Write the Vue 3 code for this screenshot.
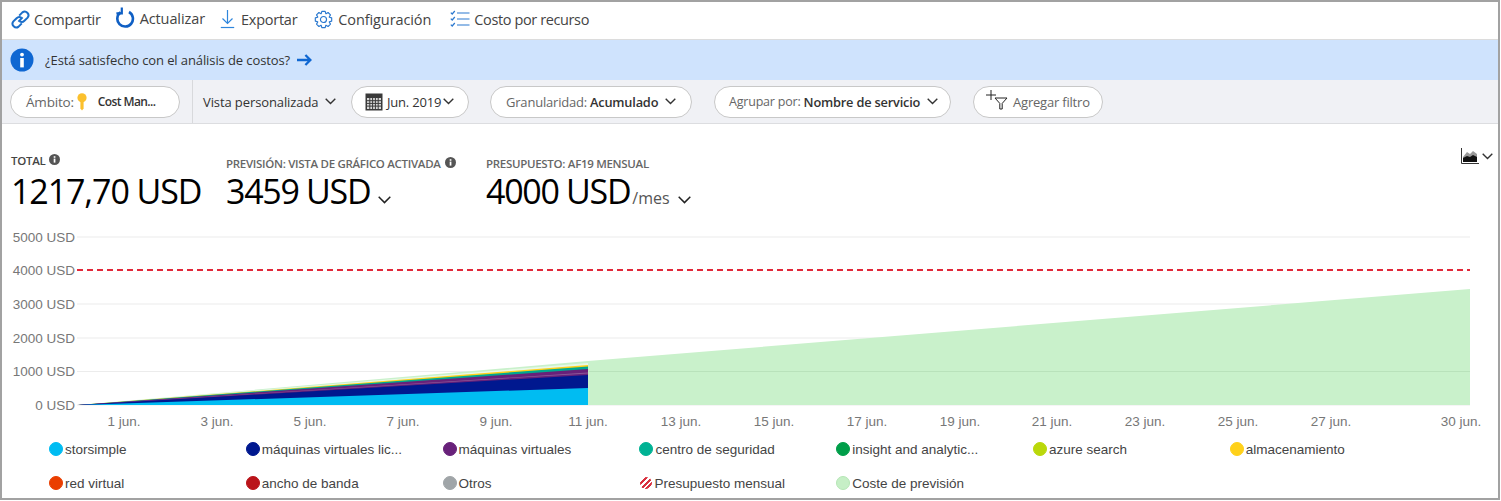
<script setup>
const gridLines = [
  { label: '5000 USD', y: 237 },
  { label: '4000 USD', y: 270 },
  { label: '3000 USD', y: 304 },
  { label: '2000 USD', y: 338 },
  { label: '1000 USD', y: 371.5 },
  { label: '0 USD', y: 405 }
]

const days = [
  { label: '1 jun.', x: 124 },
  { label: '3 jun.', x: 217 },
  { label: '5 jun.', x: 310 },
  { label: '7 jun.', x: 403 },
  { label: '9 jun.', x: 496 },
  { label: '11 jun.', x: 588 },
  { label: '13 jun.', x: 681 },
  { label: '15 jun.', x: 774 },
  { label: '17 jun.', x: 867 },
  { label: '19 jun.', x: 960 },
  { label: '21 jun.', x: 1052 },
  { label: '23 jun.', x: 1145 },
  { label: '25 jun.', x: 1238 },
  { label: '27 jun.', x: 1331 },
  { label: '30 jun.', x: 1461 }
]

// stacked layers, top to bottom so the lower ones paint last
const layers = [
  { color: '#ffd11a', top: 365 },
  { color: '#00a88f', top: 366.6 },
  { color: '#68217a', top: 369 },
  { color: '#8d5a99', top: 372.6 },
  { color: '#68217a', top: 373.4 },
  { color: '#00188f', top: 375 },
  { color: '#00bcf2', top: 388 }
]

const legend = [
  { name: 'storsimple', color: '#00bcf2' },
  { name: 'máquinas virtuales lic...', color: '#00188f' },
  { name: 'máquinas virtuales', color: '#68217a' },
  { name: 'centro de seguridad', color: '#00b294' },
  { name: 'insight and analytic...', color: '#009e49' },
  { name: 'azure search', color: '#bad80a' },
  { name: 'almacenamiento', color: '#ffd11a' },
  { name: 'red virtual', color: '#ea3e00' },
  { name: 'ancho de banda', color: '#ba141a' },
  { name: 'Otros', color: '#a0a5a8' },
  { name: 'Presupuesto mensual', hatch: true },
  { name: 'Coste de previsión', color: '#c6efc6', ring: '#b5e6b5' }
]

// gear outline for the settings button
function gearPath() {
  const pts = []
  const teeth = 8
  for (let i = 0; i < teeth; i++) {
    const a = (i / teeth) * Math.PI * 2
    const step = (Math.PI * 2) / teeth
    const offsets = [
      [-0.5, 6.6],
      [-0.27, 8.8],
      [0.27, 8.8],
      [0.5, 6.6]
    ]
    for (const [o, r] of offsets) {
      const t = a + o * step * 0.95
      pts.push((10 + r * Math.cos(t)).toFixed(2) + ' ' + (10 + r * Math.sin(t)).toFixed(2))
    }
  }
  return 'M' + pts.join('L') + 'Z'
}
</script>

<template>
  <div class="page">
    <div class="toolbar">
      <button class="tool tool-share">
        <svg width="21" height="21" viewBox="0 0 21 21" fill="none" stroke="#1b6ec9" stroke-width="2">
          <path d="M8.4 12.6l4.2-4.2" />
          <path d="M9.2 6.6l3.2-3.2a3.7 3.7 0 0 1 5.2 5.2l-3.2 3.2a3.7 3.7 0 0 1-4.8.3" />
          <path d="M11.8 14.4l-3.2 3.2a3.7 3.7 0 0 1-5.2-5.2l3.2-3.2a3.7 3.7 0 0 1 4.8-.3" />
        </svg>
        Compartir
      </button>
      <button class="tool tool-refresh">
        <svg width="19" height="22" viewBox="0 0 19 22" fill="none" stroke="#0f5fc4" stroke-width="2.6">
          <path d="M4.6 5.4A7.8 7.8 0 1 0 13 5" />
          <path d="M5.8 0.6v5.8H0.4" stroke-width="2.2" />
        </svg>
        Actualizar
      </button>
      <button class="tool tool-export">
        <svg width="15" height="20" viewBox="0 0 15 20" fill="none" stroke="#2f86dc" stroke-width="1.2">
          <path d="M7.5 1v13" />
          <path d="M2.5 9.5l5 5 5-5" />
          <path d="M0.8 18.5h13.4" />
        </svg>
        Exportar
      </button>
      <button class="tool tool-config">
        <svg width="19" height="19" viewBox="0 0 20 20" fill="none" stroke="#2a78cf" stroke-width="1.2">
          <path :d="gearPath()" stroke-linejoin="round" />
          <circle cx="10" cy="10" r="3.2" />
        </svg>
        Configuración
      </button>
      <button class="tool tool-cost">
        <svg width="20" height="18" viewBox="0 0 20 18" fill="none" stroke="#2a78cf" stroke-width="1.2">
          <path d="M7 3h12.5M7 9h12.5M7 15h12.5" />
          <path d="M0.8 2.6l1.4 1.4 2.6-3M0.8 8.6l1.4 1.4 2.6-3M0.8 14.6l1.4 1.4 2.6-3" />
        </svg>
        Costo por recurso
      </button>
    </div>

    <div class="banner">
      <svg class="info-big" width="24" height="24" viewBox="0 0 24 24">
        <circle cx="12" cy="12" r="11.5" fill="#0f67d2" />
        <circle cx="12" cy="6.6" r="1.9" fill="#fff" />
        <rect x="10.2" y="10" width="3.6" height="9.4" fill="#fff" />
      </svg>
      <span class="banner-text">¿Está satisfecho con el análisis de costos?</span>
      <svg width="15" height="12" viewBox="0 0 15 12" fill="none" stroke="#0f67d2" stroke-width="2.3">
        <path d="M0 6h13M8.4 1l5 5-5 5" />
      </svg>
    </div>

    <div class="filters">
      <div class="pill pill-scope">
        <span class="muted">Ámbito:</span>
        <svg class="key" width="10" height="18" viewBox="0 0 10 18" fill="#fbc02d">
          <circle cx="5" cy="4.8" r="4.6" />
          <path d="M3.4 8h3.2v7.4L5 17.6l-1.6-2z" />
        </svg>
        <b>Cost Man...</b>
      </div>
      <div class="divider"></div>
      <div class="view-name">
        Vista personalizada
        <svg class="chev" width="11" height="7" viewBox="0 0 11 7"><path d="M0.7 0.8l4.8 4.8 4.8-4.8" /></svg>
      </div>
      <div class="pill pill-date">
        <svg width="18" height="18" viewBox="0 0 18 18">
          <rect x="0.5" y="0.5" width="17" height="17" fill="#3a3a3a" />
          <rect x="2" y="5" width="14" height="11" fill="#d9d9d9" />
          <path d="M2 7.7h14M2 10.4h14M2 13.1h14M4.8 5v11M7.6 5v11M10.4 5v11M13.2 5v11" stroke="#3a3a3a" stroke-width="1" />
        </svg>
        <span class="date-text">Jun. 2019</span>
        <svg class="chev" width="11" height="7" viewBox="0 0 11 7"><path d="M0.7 0.8l4.8 4.8 4.8-4.8" /></svg>
      </div>
      <div class="pill pill-gran">
        <span class="muted">Granularidad:</span>
        <b>Acumulado</b>
        <svg class="chev chev-wide" width="11" height="7" viewBox="0 0 11 7"><path d="M0.7 0.8l4.8 4.8 4.8-4.8" /></svg>
      </div>
      <div class="pill pill-group">
        <span class="muted">Agrupar por:</span>
        <b>Nombre de servicio</b>
        <svg class="chev chev-wide" width="11" height="7" viewBox="0 0 11 7"><path d="M0.7 0.8l4.8 4.8 4.8-4.8" /></svg>
      </div>
      <div class="pill pill-add">
        <svg class="filter-icon" width="22" height="20" viewBox="0 0 22 20" fill="none" stroke="#222" stroke-width="1">
          <path d="M0 5h10M5 0v10" />
          <path d="M9 8h12l-4.8 5.4V19h-2.4v-5.6z" />
        </svg>
        <span class="muted">Agregar filtro</span>
      </div>
    </div>

    <div class="metrics">
      <div class="metric metric-total">
        <div class="metric-label">
          TOTAL
          <svg class="info" width="11" height="11" viewBox="0 0 11 11">
            <circle cx="5.5" cy="5.5" r="5.5" fill="#555" />
            <rect x="4.7" y="4.6" width="1.7" height="4" fill="#fff" />
            <rect x="4.7" y="2.2" width="1.7" height="1.6" fill="#fff" />
          </svg>
        </div>
        <div class="metric-value"><span>1217,70 USD</span></div>
      </div>
      <div class="metric metric-forecast">
        <div class="metric-label">
          PREVISIÓN: VISTA DE GRÁFICO ACTIVADA
          <svg class="info" width="11" height="11" viewBox="0 0 11 11">
            <circle cx="5.5" cy="5.5" r="5.5" fill="#555" />
            <rect x="4.7" y="4.6" width="1.7" height="4" fill="#fff" />
            <rect x="4.7" y="2.2" width="1.7" height="1.6" fill="#fff" />
          </svg>
        </div>
        <div class="metric-value">
          <span>3459 USD</span>
          <svg class="value-chev" width="13" height="8" viewBox="0 0 13 8"><path d="M0.7 0.8l5.8 5.8 5.8-5.8" /></svg>
        </div>
      </div>
      <div class="metric metric-budget">
        <div class="metric-label">PRESUPUESTO: AF19 MENSUAL</div>
        <div class="metric-value">
          <span>4000 USD</span><span class="per">/mes</span>
          <svg class="value-chev" width="13" height="8" viewBox="0 0 13 8"><path d="M0.7 0.8l5.8 5.8 5.8-5.8" /></svg>
        </div>
      </div>
      <div class="chart-switch">
        <svg width="18" height="16" viewBox="0 0 18 16">
          <path d="M0.5 0v15.5H18" fill="none" stroke="#333" stroke-width="1" />
          <path d="M2 9l4-5 3 2 3-3 4 3v4H2z" fill="#999" />
          <path d="M2 14v-4l4-2 3 1 3-2 4 2v5z" fill="#111" />
        </svg>
        <svg class="chev" width="11" height="7" viewBox="0 0 11 7"><path d="M0.7 0.8l4.8 4.8 4.8-4.8" /></svg>
      </div>
    </div>

    <svg class="chart" width="1496" height="207" viewBox="2 225 1496 207">
      <g v-for="line in gridLines" :key="line.label">
        <line v-if="line.y !== 270" x1="77" x2="1470" :y1="line.y" :y2="line.y" stroke="#ececec" stroke-width="1.2" />
        <text class="axis" x="75" :y="line.y + 4.5" text-anchor="end">{{ line.label }}</text>
      </g>
      <polygon points="78,405 588,361 1470,289 1470,405" fill="#c9f1cb" />
      <line x1="589" x2="1470" y1="371.5" y2="371.5" stroke="#b9e2bb" stroke-width="1" />
      <polygon points="78,405 588,363 588,405" fill="#fff" opacity="0.55" />
      <polygon
        v-for="(layer, i) in layers"
        :key="i"
        :points="`78,405 588,${layer.top} 588,405`"
        :fill="layer.color"
      />
      <line x1="77" x2="1470" y1="270" y2="270" stroke="#e2283a" stroke-width="2" stroke-dasharray="6 4" />
      <text v-for="day in days" :key="day.label" class="axis" :x="day.x" y="426" text-anchor="middle">{{ day.label }}</text>
    </svg>

    <div class="legend">
      <div v-for="item in legend" :key="item.name" class="legend-item">
        <span v-if="item.hatch" class="hatch"></span>
        <span
          v-else
          class="dot"
          :style="{ background: item.color, borderColor: item.ring || item.color }"
        ></span>
        <span class="legend-name">{{ item.name }}</span>
      </div>
    </div>
  </div>
</template>

<style>
html,
body {
  margin: 0;
  background: #fff;
  overflow: hidden;
}
</style>

<style scoped>
.page {
  width: 1500px;
  height: 500px;
  box-sizing: border-box;
  border: 2px solid #a2a2a2;
  overflow: hidden;
  font-family: 'Open Sans', 'Liberation Sans', sans-serif;
  color: #333;
  background: #fff;
}

.toolbar {
  height: 34px;
  display: flex;
  align-items: center;
  padding: 0 0 3px 8px;
  border-bottom: 1px solid #dcdcdc;
}

.tool {
  display: flex;
  align-items: center;
  padding: 0;
  border: none;
  background: none;
  font-family: inherit;
  font-size: 14.5px;
  letter-spacing: -0.25px;
  color: #444;
}

.tool-share { gap: 3px; margin-right: 15px; }
.tool-refresh { gap: 5px; margin-right: 15px; margin-top: -2px; letter-spacing: -0.1px; }
.tool-export { gap: 6px; margin-right: 17px; }
.tool-config { gap: 5px; margin-right: 19px; letter-spacing: -0.1px; }
.tool-cost { gap: 4px; letter-spacing: -0.38px; }

.banner {
  height: 40px;
  display: flex;
  align-items: center;
  padding-left: 8px;
  background: #cfe3fd;
}

.banner-text {
  margin-left: 11px;
  margin-right: 7px;
  font-size: 13px;
  letter-spacing: -0.1px;
  color: #333;
}

.filters {
  height: 44px;
  display: flex;
  align-items: center;
  box-sizing: border-box;
  padding-left: 8px;
  background: #f0f1f5;
  border-bottom: 1px solid #dcdde0;
}

.pill {
  height: 32px;
  box-sizing: border-box;
  display: flex;
  align-items: center;
  border: 1px solid #c8c8c8;
  border-radius: 16px;
  background: #fff;
  font-size: 13px;
  letter-spacing: -0.2px;
  white-space: nowrap;
}

.pill b {
  font-weight: 600;
  color: #333;
}

.muted {
  color: #666;
}

.pill-scope {
  width: 170px;
  padding-left: 15px;
}

.pill-scope .muted {
  font-size: 13.5px;
}

.pill-scope b {
  font-size: 12px;
  letter-spacing: -0.6px;
}

.key {
  margin: 0 11px 0 3px;
}

.divider {
  width: 1px;
  height: 43px;
  margin-left: 12px;
  background: #d8d9dc;
}

.view-name {
  display: flex;
  align-items: center;
  gap: 7px;
  width: 148px;
  margin-left: 10px;
  font-size: 13px;
  letter-spacing: -0.1px;
  white-space: nowrap;
}

.chev {
  flex: none;
  fill: none;
  stroke: #333;
  stroke-width: 1.4;
}

.pill-date {
  width: 118px;
  padding-left: 13px;
}

.date-text {
  margin: 0 2px 0 4px;
}

.pill-gran {
  width: 202px;
  margin-left: 21px;
  padding-left: 15px;
}

.pill-gran b {
  margin-left: 3px;
  font-size: 12.8px;
}

.chev-wide {
  margin-left: 7px;
}

.pill-group {
  width: 237px;
  margin-left: 22px;
  padding-left: 14px;
  font-size: 12.5px;
}

.pill-group b {
  margin-left: 3px;
  font-size: 12.8px;
}

.pill-add {
  width: 130px;
  margin-left: 22px;
  padding-left: 12px;
}

.filter-icon {
  margin: -4px 5px 0 0;
}

.metrics {
  position: relative;
  height: 101px;
  display: flex;
}

.metric {
  flex: none;
}

.metric-total {
  width: 215px;
  margin-left: 9px;
  padding-top: 29px;
}

.metric-forecast {
  width: 260px;
  padding-top: 32px;
}

.metric-budget {
  padding-top: 32px;
}

.metric-label {
  display: flex;
  align-items: center;
  gap: 3px;
  height: 14px;
  font-size: 11.5px;
  font-weight: 600;
  letter-spacing: -0.3px;
  color: #666;
  white-space: nowrap;
}

.metric-total .metric-label {
  color: #444;
}

.info {
  margin-top: -2px;
  margin-left: 1px;
}

.metric-value {
  display: flex;
  align-items: baseline;
  font-size: 34px;
  letter-spacing: -1.3px;
  line-height: 36px;
  color: #000;
  white-space: nowrap;
}

.metric-total .metric-value {
  margin-top: 6px;
  letter-spacing: -1.1px;
}

.metric-forecast .metric-value {
  margin-top: 3px;
}

.metric-budget .metric-value {
  margin-top: 3px;
}

.per {
  margin-left: 2px;
  font-size: 16px;
  letter-spacing: 0;
  color: #555;
}

.value-chev {
  margin-left: 8px;
  fill: none;
  stroke: #222;
  stroke-width: 1.5;
}

.chart-switch {
  position: absolute;
  top: 24px;
  left: 1459px;
  display: flex;
  align-items: center;
  gap: 3px;
}

.chart {
  display: block;
}

.axis {
  font-family: 'Liberation Sans', Arial, sans-serif;
  font-size: 13.5px;
  fill: #777;
}

.legend {
  display: grid;
  grid-template-columns: repeat(7, 196.8px);
  grid-auto-rows: 34px;
  padding-left: 47px;
}

.legend-item {
  display: flex;
  align-items: center;
  font-family: 'Liberation Sans', Arial, sans-serif;
  font-size: 13.5px;
  color: #444;
  white-space: nowrap;
}

.dot {
  width: 14px;
  height: 14px;
  box-sizing: border-box;
  margin-right: 2px;
  border: 1px solid;
  border-radius: 50%;
}

.hatch {
  width: 12px;
  height: 12px;
  margin: 0 2px 0 1px;
  border-radius: 50%;
  background: repeating-linear-gradient(135deg, #d9303f 0 2px, #fff 2px 4px);
}
</style>
